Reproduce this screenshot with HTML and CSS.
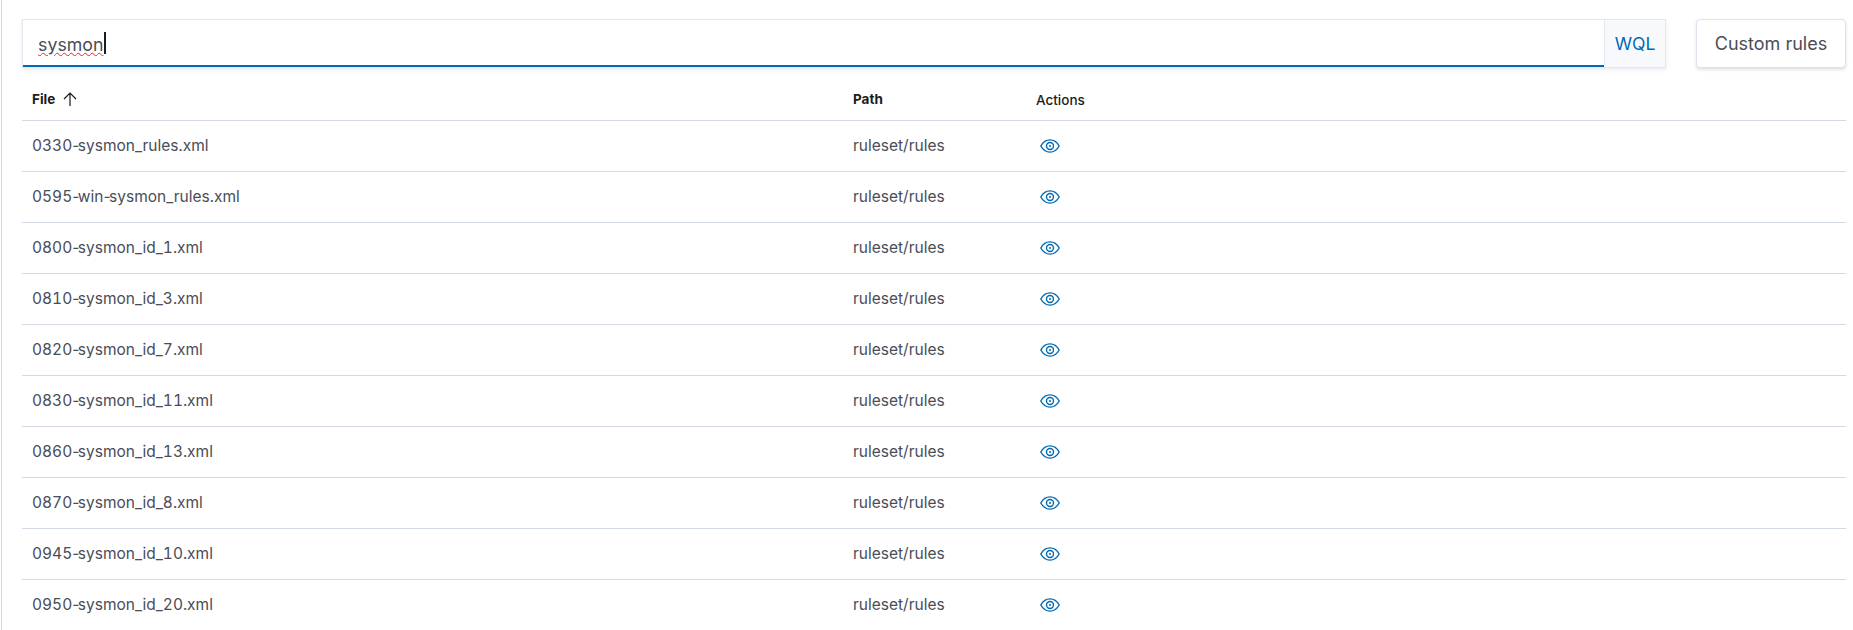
FILE: index.html
```html
<!DOCTYPE html>
<html lang="en">
<head>
<meta charset="utf-8">
<title>Rules files</title>
<link rel="stylesheet" href="styles.css">
</head>
<body>
<svg class="defs" width="0" height="0" aria-hidden="true">
  <symbol id="eye" viewBox="0 0 20 14">
    <path d="M0.8 7C3 3 6.2 0.9 10 0.9s7 2.1 9.2 6.1C17 11 13.8 13.1 10 13.1S3 11 0.8 7Z" fill="none" stroke="currentColor" stroke-width="1.4"/>
    <circle cx="10" cy="7" r="3.5" fill="none" stroke="currentColor" stroke-width="1.4"/>
    <circle cx="10" cy="7" r="1" fill="currentColor"/>
  </symbol>
</svg>
<main class="page">
  <div class="toolbar">
    <div class="search">
      <div class="search-input"><span class="typed">sysmon</span><span class="caret"></span></div>
      <div class="wql">WQL</div>
    </div>
    <button class="custom" type="button">Custom rules</button>
  </div>
  <div class="table">
    <div class="row head">
      <div class="c-file">File <svg class="arrow" width="16" height="16" viewBox="0 0 16 16"><path d="M8 15V2M2 8l6-6 6 6" fill="none" stroke="currentColor" stroke-width="1.2"/></svg></div>
      <div class="c-path">Path</div>
      <div class="c-act act-head">Actions</div>
    </div>
    <div class="row"><div class="c-file"><span>0330<span class="dash">-</span>sysmon_rules.xml</span></div><div class="c-path">ruleset/rules</div><div class="c-act"><svg class="eye"><use href="#eye"/></svg></div></div>
    <div class="row"><div class="c-file"><span>0595<span class="dash">-</span>win<span class="dash">-</span>sysmon_rules.xml</span></div><div class="c-path">ruleset/rules</div><div class="c-act"><svg class="eye"><use href="#eye"/></svg></div></div>
    <div class="row"><div class="c-file"><span>0800<span class="dash">-</span>sysmon_id_1.xml</span></div><div class="c-path">ruleset/rules</div><div class="c-act"><svg class="eye"><use href="#eye"/></svg></div></div>
    <div class="row"><div class="c-file"><span>0810<span class="dash">-</span>sysmon_id_3.xml</span></div><div class="c-path">ruleset/rules</div><div class="c-act"><svg class="eye"><use href="#eye"/></svg></div></div>
    <div class="row"><div class="c-file"><span>0820<span class="dash">-</span>sysmon_id_7.xml</span></div><div class="c-path">ruleset/rules</div><div class="c-act"><svg class="eye"><use href="#eye"/></svg></div></div>
    <div class="row"><div class="c-file"><span>0830<span class="dash">-</span>sysmon_id_11.xml</span></div><div class="c-path">ruleset/rules</div><div class="c-act"><svg class="eye"><use href="#eye"/></svg></div></div>
    <div class="row"><div class="c-file"><span>0860<span class="dash">-</span>sysmon_id_13.xml</span></div><div class="c-path">ruleset/rules</div><div class="c-act"><svg class="eye"><use href="#eye"/></svg></div></div>
    <div class="row"><div class="c-file"><span>0870<span class="dash">-</span>sysmon_id_8.xml</span></div><div class="c-path">ruleset/rules</div><div class="c-act"><svg class="eye"><use href="#eye"/></svg></div></div>
    <div class="row"><div class="c-file"><span>0945<span class="dash">-</span>sysmon_id_10.xml</span></div><div class="c-path">ruleset/rules</div><div class="c-act"><svg class="eye"><use href="#eye"/></svg></div></div>
    <div class="row"><div class="c-file"><span>0950<span class="dash">-</span>sysmon_id_20.xml</span></div><div class="c-path">ruleset/rules</div><div class="c-act"><svg class="eye"><use href="#eye"/></svg></div></div>
  </div>
</main>
</body>
</html>
```

FILE: styles.css
```css
html, body {
  margin: 0;
  height: 630px;
  overflow: hidden;
  background: #fff;
  font-family: Inter, "Liberation Sans", sans-serif;
  color: #343741;
}
.defs { position: absolute; }
.page {
  height: 630px;
  box-sizing: border-box;
  margin-left: 1px;
  border-left: 1px solid #d3dae6;
  padding: 19px 7px 0 20px;
}
.toolbar {
  display: flex;
  gap: 30px;
  height: 49px;
}
.search {
  flex: 1;
  display: flex;
  box-sizing: border-box;
  border: 1px solid #e3e7ef;
  box-shadow: 0 2px 4px rgba(152, 162, 179, 0.2);
}
.search-input {
  flex: 1;
  display: flex;
  align-items: center;
  padding: 3px 0 0 15px;
  border-bottom: 2px solid #006bb4;
  font-size: 17.8px;
  color: #4a4d57;
}
.typed {
  text-decoration: underline wavy #e8262a 1px;
  text-underline-offset: 1px;
}
.caret {
  width: 2px;
  height: 22px;
  margin-top: -2px;
  background: #1a1c21;
}
.wql {
  width: 60px;
  display: flex;
  align-items: center;
  justify-content: center;
  background: #f8f9fc;
  border-left: 1px solid #e3e7ef;
  font-size: 17.6px;
  color: #006bb4;
}
.custom {
  width: 150px;
  box-sizing: border-box;
  padding: 0;
  background: #fff;
  border: 1px solid #dde2ec;
  border-radius: 4px;
  box-shadow: 0 2px 3px rgba(152, 162, 179, 0.3);
  font: 18px Inter, "Liberation Sans", sans-serif;
  color: #4a4d57;
}
.row {
  display: grid;
  grid-template-columns: 821px 183px 1fr;
  align-items: center;
  height: 51px;
  box-sizing: border-box;
  border-bottom: 1px solid #d3dae6;
  font-size: 15.5px;
  font-variant-numeric: tabular-nums;
  color: #4a4d57;
  padding-left: 10px;
  padding-bottom: 1px;
}
.dash {
  font-variant-numeric: normal;
  letter-spacing: -1.5px;
}
.row.head {
  height: 53px;
  font-size: 13.5px;
  font-weight: 700;
  color: #1a1c21;
  padding-top: 10px;
  padding-bottom: 0;
}
.c-file {
  display: flex;
  align-items: center;
  gap: 7px;
}
.act-head {
  font-weight: 500;
  padding-top: 2px;
}
.c-act {
  display: flex;
  align-items: center;
}
.eye {
  width: 20px;
  height: 14px;
  margin-left: 4px;
  color: #006bb4;
}
.arrow {
  color: #1a1c21;
}
```
